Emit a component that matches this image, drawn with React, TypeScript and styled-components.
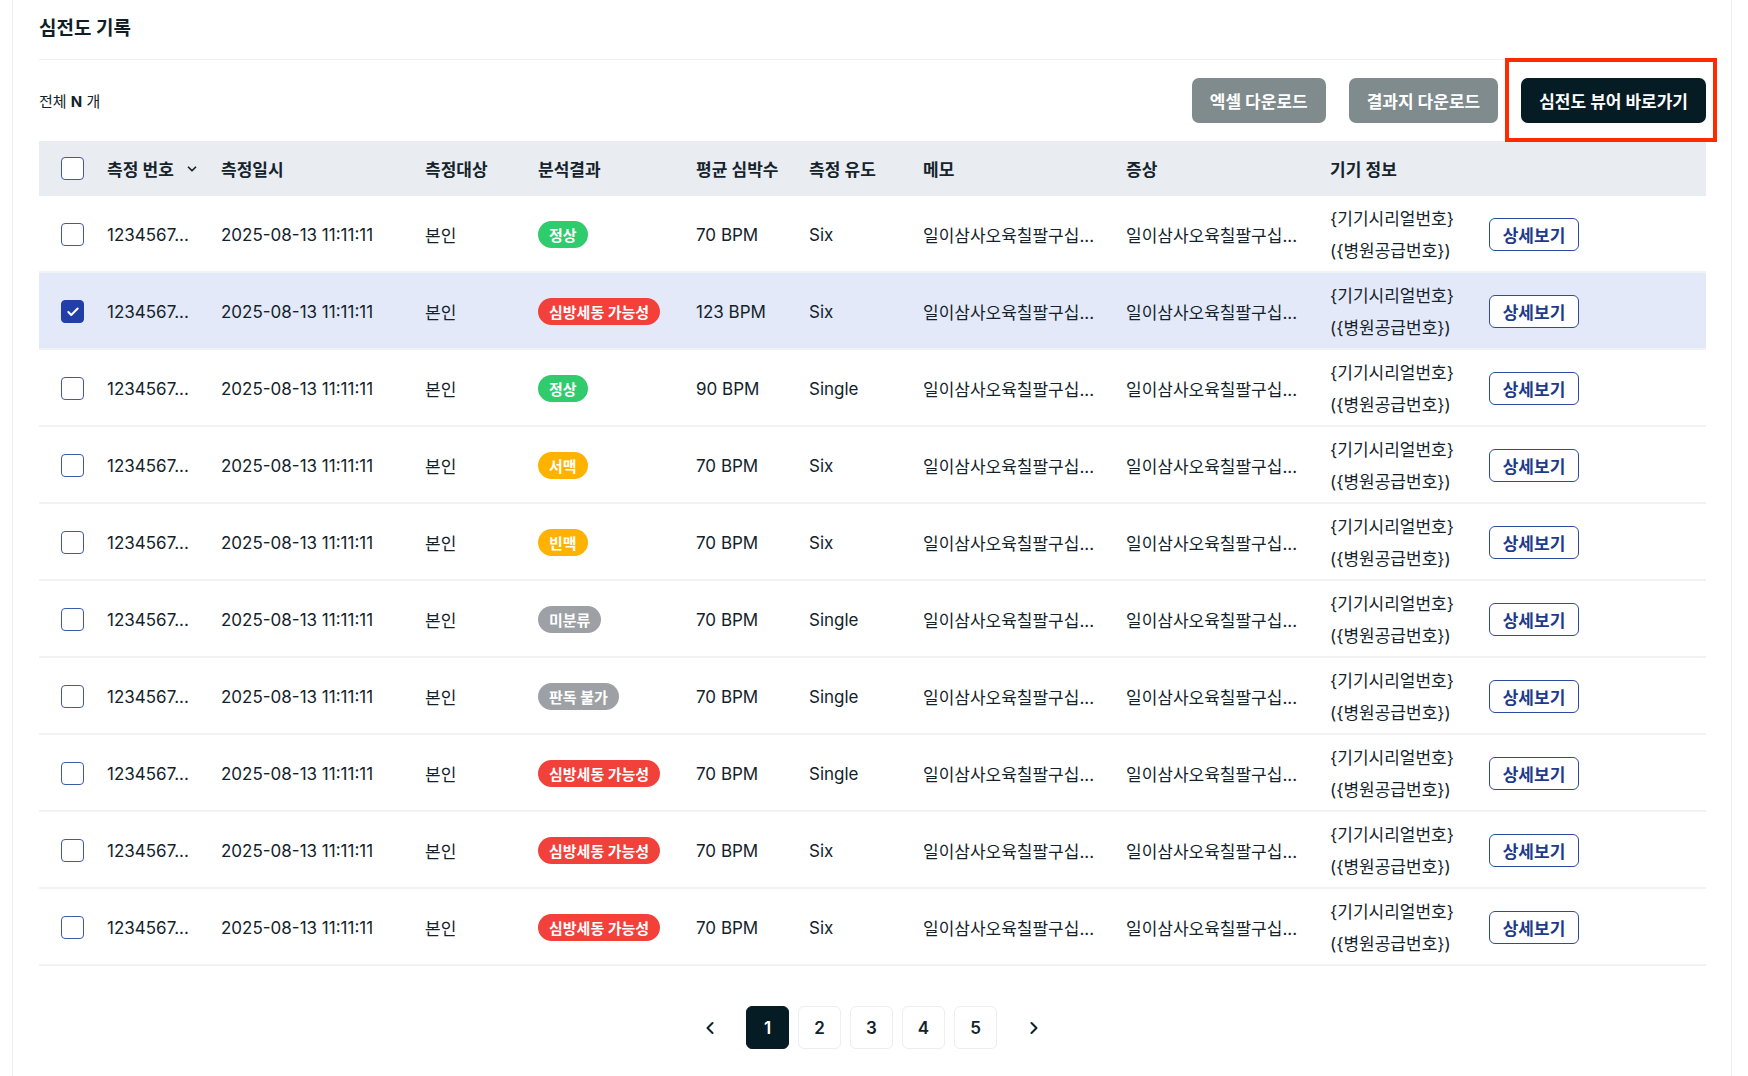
import React from "react";
import styled, { createGlobalStyle, css } from "styled-components";
import { Check, ChevronDown, ChevronLeft, ChevronRight } from "lucide-react";

type Result = "정상" | "심방세동 가능성" | "서맥" | "빈맥" | "미분류" | "판독 불가";

type Record = {
  result: Result;
  bpm: number;
  lead: "Six" | "Single";
  checked?: boolean;
};

const COLS =
  "68px 114px 204px 113px 158px 113px 114px 203px 204px 159px 1fr";

const records: Record[] = [
  { result: "정상", bpm: 70, lead: "Six" },
  { result: "심방세동 가능성", bpm: 123, lead: "Six", checked: true },
  { result: "정상", bpm: 90, lead: "Single" },
  { result: "서맥", bpm: 70, lead: "Six" },
  { result: "빈맥", bpm: 70, lead: "Six" },
  { result: "미분류", bpm: 70, lead: "Single" },
  { result: "판독 불가", bpm: 70, lead: "Single" },
  { result: "심방세동 가능성", bpm: 70, lead: "Single" },
  { result: "심방세동 가능성", bpm: 70, lead: "Six" },
  { result: "심방세동 가능성", bpm: 70, lead: "Six" },
];

const badgeColor: { [k in Result]: string } = {
  정상: "#2fcb6c",
  "심방세동 가능성": "#f2403a",
  서맥: "#ffb300",
  빈맥: "#ffb300",
  미분류: "#9da1a5",
  "판독 불가": "#9da1a5",
};

const GlobalStyle = createGlobalStyle`
  body {
    margin: 0;
    background: #fff;
    font-family: Inter, "Noto Sans CJK KR", sans-serif;
    color: #13232b;
  }
`;

const Page = styled.div`
  padding: 0 16px 0 12px;
  height: 1076px;
  overflow: hidden;
`;

const Card = styled.section`
  border-left: 1px solid #eceef0;
  border-right: 1px solid #eceef0;
  padding: 0 25px 0 26px;
  min-height: 1076px;
  box-sizing: border-box;
`;

const Title = styled.h2`
  margin: 0;
  padding: 15px 0 16px;
  font-size: 19px;
  line-height: 28px;
  font-weight: 700;
  color: #0f1f27;
  border-bottom: 1px solid #eef0f2;
`;

const Toolbar = styled.div`
  position: relative;
  display: flex;
  align-items: center;
  justify-content: space-between;
  padding: 18px 0 18px;
`;

const Total = styled.div`
  font-size: 15px;
  color: #13232b;
  b {
    font-weight: 700;
  }
`;

const Actions = styled.div`
  display: flex;
  gap: 23px;
`;

const ActionButton = styled.button<{ $dark?: boolean }>`
  height: 45px;
  padding: 0 18px;
  border: none;
  border-radius: 7px;
  font-family: inherit;
  font-size: 17px;
  font-weight: 700;
  color: #fff;
  background: ${(p) => (p.$dark ? "#051c25" : "#7f8b8c")};
  cursor: pointer;
`;

const Highlight = styled.div`
  position: absolute;
  right: -11px;
  top: -2px;
  width: 212px;
  height: 84px;
  border: 4px solid #ff2a00;
  box-sizing: border-box;
  pointer-events: none;
`;

const gridRow = css`
  display: grid;
  grid-template-columns: ${COLS};
  align-items: center;
`;

const HeaderRow = styled.div`
  ${gridRow};
  height: 55px;
  background: #e9ecf0;
  font-size: 17px;
  font-weight: 600;
  color: #15242c;
`;

const HeadCell = styled.div`
  display: flex;
  align-items: center;
  gap: 11px;
  white-space: nowrap;
`;

const Row = styled.div<{ $selected?: boolean }>`
  ${gridRow};
  height: 77px;
  padding-top: 5px;
  box-sizing: border-box;
  border-bottom: 2px solid #f1f2f4;
  background: ${(p) => (p.$selected ? "#e3e9f8" : "#fff")};
  font-size: 17px;
  color: #13232b;
`;

const Cell = styled.div`
  white-space: nowrap;
  overflow: hidden;
`;

const CheckCell = styled.div`
  padding-left: 22px;
  display: flex;
  align-items: center;
`;

const CheckBox = styled.span<{ $checked?: boolean }>`
  width: 23px;
  height: 23px;
  box-sizing: border-box;
  border-radius: 4px;
  border: 1.5px solid ${(p) => (p.$checked ? "#213fa7" : "#3f5aa6")};
  background: ${(p) => (p.$checked ? "#213fa7" : "#fff")};
  display: flex;
  align-items: center;
  justify-content: center;
  color: #fff;
`;

const Badge = styled.span<{ $color: string }>`
  display: inline-flex;
  align-items: center;
  height: 27px;
  padding: 0 11px;
  border-radius: 14px;
  background: ${(p) => p.$color};
  color: #fff;
  font-size: 15px;
  font-weight: 700;
`;

const Device = styled.div`
  line-height: 32px;
  font-size: 17px;
  white-space: nowrap;
`;

const DetailButton = styled.button`
  width: 90px;
  height: 33px;
  border: 1.5px solid #2e4c9e;
  border-radius: 6px;
  background: #fff;
  color: #1e3a8a;
  font-family: inherit;
  font-size: 17px;
  font-weight: 700;
  cursor: pointer;
`;

const Pagination = styled.nav`
  display: flex;
  justify-content: center;
  align-items: center;
  gap: 9px;
  padding-top: 40px;
  margin-left: -2px;
`;

const PageButton = styled.button<{ $active?: boolean }>`
  width: 43px;
  height: 43px;
  border-radius: 6px;
  border: 1px solid ${(p) => (p.$active ? "#051c25" : "#eceef0")};
  background: ${(p) => (p.$active ? "#051c25" : "#fff")};
  color: ${(p) => (p.$active ? "#fff" : "#13232b")};
  font-family: inherit;
  font-size: 17px;
  font-weight: 600;
  cursor: pointer;
`;

const Arrow = styled.button`
  width: 43px;
  height: 43px;
  border: none;
  background: none;
  color: #13232b;
  display: flex;
  align-items: center;
  justify-content: center;
  margin: 0 6px;
  cursor: pointer;
`;

const App: React.FC = () => {
  return (
    <Page>
      <GlobalStyle />
      <Card>
        <Title>심전도 기록</Title>
        <Toolbar>
          <Total>
            전체 <b>N</b> 개
          </Total>
          <Actions>
            <ActionButton>엑셀 다운로드</ActionButton>
            <ActionButton>결과지 다운로드</ActionButton>
            <ActionButton $dark>심전도 뷰어 바로가기</ActionButton>
          </Actions>
          <Highlight />
        </Toolbar>

        <HeaderRow>
          <CheckCell>
            <CheckBox />
          </CheckCell>
          <HeadCell>
            측정 번호 <ChevronDown size={14} strokeWidth={3} />
          </HeadCell>
          <HeadCell>측정일시</HeadCell>
          <HeadCell>측정대상</HeadCell>
          <HeadCell>분석결과</HeadCell>
          <HeadCell>평균 심박수</HeadCell>
          <HeadCell>측정 유도</HeadCell>
          <HeadCell>메모</HeadCell>
          <HeadCell>증상</HeadCell>
          <HeadCell>기기 정보</HeadCell>
          <HeadCell />
        </HeaderRow>

        {records.map((r, i) => (
          <Row key={i} $selected={r.checked}>
            <CheckCell>
              <CheckBox $checked={r.checked}>
                {r.checked && <Check size={14} strokeWidth={3.5} />}
              </CheckBox>
            </CheckCell>
            <Cell>1234567...</Cell>
            <Cell>2025-08-13 11:11:11</Cell>
            <Cell>본인</Cell>
            <Cell>
              <Badge $color={badgeColor[r.result]}>{r.result}</Badge>
            </Cell>
            <Cell>{r.bpm} BPM</Cell>
            <Cell>{r.lead}</Cell>
            <Cell>일이삼사오육칠팔구십...</Cell>
            <Cell>일이삼사오육칠팔구십...</Cell>
            <Device>
              {"{기기시리얼번호}"}
              <br />
              {"({병원공급번호})"}
            </Device>
            <Cell>
              <DetailButton>상세보기</DetailButton>
            </Cell>
            <Cell />
          </Row>
        ))}

        <Pagination>
          <Arrow>
            <ChevronLeft size={20} strokeWidth={2.5} />
          </Arrow>
          {[1, 2, 3, 4, 5].map((n) => (
            <PageButton key={n} $active={n === 1}>
              {n}
            </PageButton>
          ))}
          <Arrow>
            <ChevronRight size={20} strokeWidth={2.5} />
          </Arrow>
        </Pagination>
      </Card>
    </Page>
  );
};

export default App;
